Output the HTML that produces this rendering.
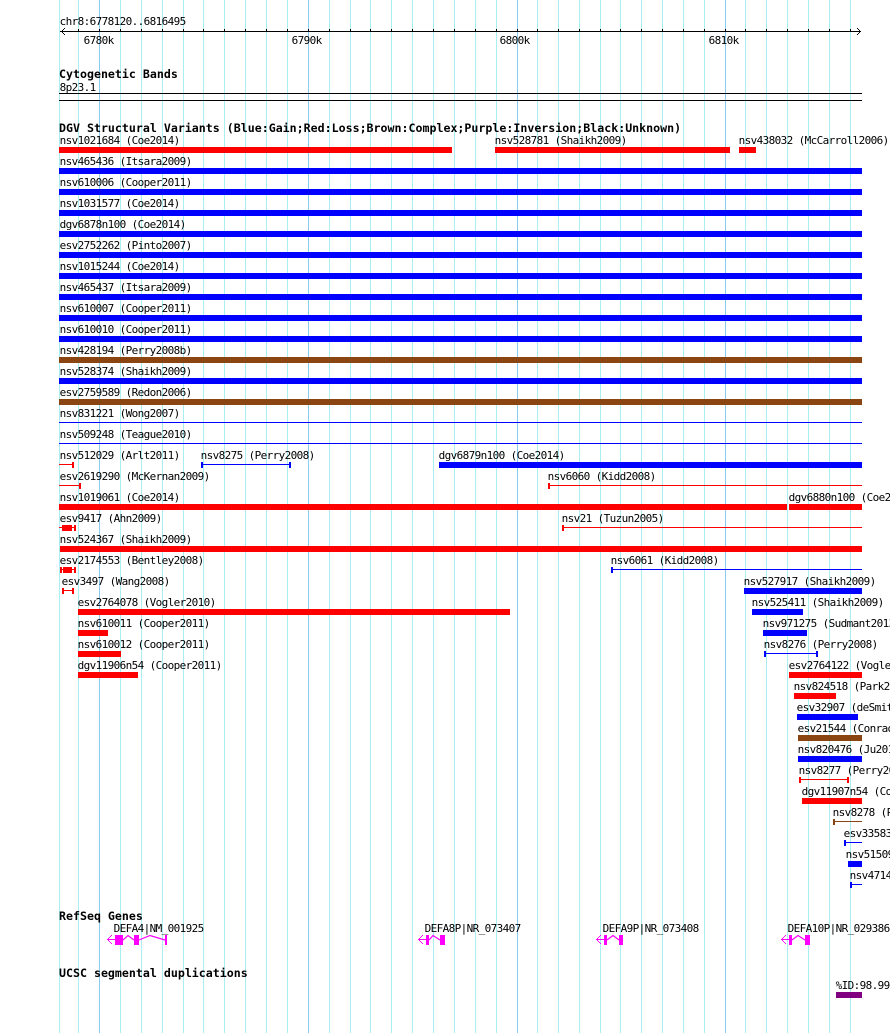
<!DOCTYPE html>
<html><head><meta charset="utf-8">
<style>
html,body{margin:0;padding:0;background:#fff;width:890px;height:1033px;overflow:hidden}
svg{display:block}
text{font-family:"DejaVu Sans Mono","Liberation Mono",monospace;font-size:11px;fill:#000;letter-spacing:-.62px;white-space:pre}
text.b{font-weight:bold;font-size:11.6px;letter-spacing:.01px}
.r{fill:#f00}.u{fill:#00f}.n{fill:#8b4513}.k{fill:#000}.m{fill:#f0f}.p{fill:#800080}
.g{fill:#a8eef2}.j{fill:#88cdf0}
</style></head><body>
<svg width="890" height="1033" viewBox="0 0 890 1033" xmlns="http://www.w3.org/2000/svg" shape-rendering="crispEdges">
<!-- grid -->
<g class="g">
<rect x="59" y="0" width="1" height="1033"/><rect x="78" y="0" width="1" height="1033"/><rect x="120" y="0" width="1" height="1033"/><rect x="141" y="0" width="1" height="1033"/><rect x="162" y="0" width="1" height="1033"/><rect x="183" y="0" width="1" height="1033"/><rect x="203" y="0" width="1" height="1033"/><rect x="224" y="0" width="1" height="1033"/><rect x="245" y="0" width="1" height="1033"/><rect x="266" y="0" width="1" height="1033"/><rect x="287" y="0" width="1" height="1033"/><rect x="329" y="0" width="1" height="1033"/><rect x="350" y="0" width="1" height="1033"/><rect x="370" y="0" width="1" height="1033"/><rect x="391" y="0" width="1" height="1033"/><rect x="412" y="0" width="1" height="1033"/><rect x="433" y="0" width="1" height="1033"/><rect x="454" y="0" width="1" height="1033"/><rect x="475" y="0" width="1" height="1033"/><rect x="496" y="0" width="1" height="1033"/><rect x="537" y="0" width="1" height="1033"/><rect x="558" y="0" width="1" height="1033"/><rect x="579" y="0" width="1" height="1033"/><rect x="600" y="0" width="1" height="1033"/><rect x="620" y="0" width="1" height="1033"/><rect x="641" y="0" width="1" height="1033"/><rect x="662" y="0" width="1" height="1033"/><rect x="683" y="0" width="1" height="1033"/><rect x="704" y="0" width="1" height="1033"/><rect x="745" y="0" width="1" height="1033"/><rect x="766" y="0" width="1" height="1033"/><rect x="787" y="0" width="1" height="1033"/><rect x="808" y="0" width="1" height="1033"/><rect x="829" y="0" width="1" height="1033"/><rect x="850" y="0" width="1" height="1033"/>
</g>
<g class="j">
<rect x="99" y="0" width="1" height="1033"/><rect x="308" y="0" width="1" height="1033"/><rect x="517" y="0" width="1" height="1033"/><rect x="725" y="0" width="1" height="1033"/>
</g>
<!-- axis -->
<g class="k">
<rect x="60" y="31" width="801" height="1"/>
<rect x="78" y="29" width="1" height="3"/><rect x="99" y="29" width="1" height="3"/><rect x="120" y="29" width="1" height="3"/><rect x="141" y="29" width="1" height="3"/><rect x="162" y="29" width="1" height="3"/><rect x="183" y="29" width="1" height="3"/><rect x="203" y="29" width="1" height="3"/><rect x="224" y="29" width="1" height="3"/><rect x="245" y="29" width="1" height="3"/><rect x="266" y="29" width="1" height="3"/><rect x="287" y="29" width="1" height="3"/><rect x="308" y="29" width="1" height="3"/><rect x="329" y="29" width="1" height="3"/><rect x="350" y="29" width="1" height="3"/><rect x="370" y="29" width="1" height="3"/><rect x="391" y="29" width="1" height="3"/><rect x="412" y="29" width="1" height="3"/><rect x="433" y="29" width="1" height="3"/><rect x="454" y="29" width="1" height="3"/><rect x="475" y="29" width="1" height="3"/><rect x="496" y="29" width="1" height="3"/><rect x="517" y="29" width="1" height="3"/><rect x="537" y="29" width="1" height="3"/><rect x="558" y="29" width="1" height="3"/><rect x="579" y="29" width="1" height="3"/><rect x="600" y="29" width="1" height="3"/><rect x="620" y="29" width="1" height="3"/><rect x="641" y="29" width="1" height="3"/><rect x="662" y="29" width="1" height="3"/><rect x="683" y="29" width="1" height="3"/><rect x="704" y="29" width="1" height="3"/><rect x="725" y="29" width="1" height="3"/><rect x="745" y="29" width="1" height="3"/><rect x="766" y="29" width="1" height="3"/><rect x="787" y="29" width="1" height="3"/><rect x="808" y="29" width="1" height="3"/><rect x="829" y="29" width="1" height="3"/><rect x="850" y="29" width="1" height="3"/>
<!-- arrowheads -->
<rect x="61" y="31" width="1" height="1"/><rect x="62" y="30" width="1" height="3"/><rect x="63" y="29" width="1" height="1"/><rect x="63" y="33" width="1" height="1"/><rect x="64" y="28" width="1" height="1"/><rect x="64" y="34" width="1" height="1"/>
<rect x="860" y="31" width="1" height="1"/><rect x="859" y="30" width="1" height="3"/><rect x="858" y="29" width="1" height="1"/><rect x="858" y="33" width="1" height="1"/><rect x="857" y="28" width="1" height="1"/><rect x="857" y="34" width="1" height="1"/>
<!-- band lines -->
<rect x="59" y="93" width="803" height="1"/><rect x="59" y="100" width="803" height="1"/>
</g>
<!-- bars -->
<g class="r">
<rect x="59" y="147" width="393" height="6"/><rect x="495" y="147" width="235" height="6"/><rect x="739" y="147" width="17" height="6"/>
<rect x="59" y="464" width="15" height="1"/><rect x="72" y="462" width="2" height="6"/>
<rect x="59" y="485" width="22" height="1"/><rect x="79" y="483" width="2" height="6"/>
<rect x="548" y="485" width="314" height="1"/><rect x="548" y="483" width="2" height="6"/>
<rect x="59" y="504" width="728" height="6"/><rect x="789" y="504" width="73" height="6"/>
<rect x="59" y="527" width="17" height="1"/><rect x="62" y="525" width="10" height="6"/><rect x="74" y="525" width="2" height="6"/>
<rect x="562" y="527" width="300" height="1"/><rect x="562" y="525" width="2" height="6"/>
<rect x="60" y="546" width="802" height="6"/>
<rect x="60" y="569" width="16" height="1"/><rect x="60" y="567" width="2" height="6"/><rect x="63" y="567" width="9" height="6"/><rect x="74" y="567" width="2" height="6"/>
<rect x="62" y="590" width="12" height="1"/><rect x="62" y="588" width="2" height="6"/><rect x="72" y="588" width="2" height="6"/>
<rect x="78" y="609" width="432" height="6"/><rect x="78" y="630" width="30" height="6"/><rect x="78" y="651" width="43" height="6"/><rect x="78" y="672" width="60" height="6"/>
<rect x="789" y="672" width="73" height="6"/><rect x="794" y="693" width="42" height="6"/>
<rect x="799" y="779" width="50" height="1"/><rect x="799" y="777" width="2" height="6"/><rect x="847" y="777" width="2" height="6"/>
<rect x="802" y="798" width="60" height="6"/>
</g>
<g class="u">
<rect x="59" y="168" width="803" height="6"/><rect x="59" y="189" width="803" height="6"/><rect x="59" y="210" width="803" height="6"/><rect x="59" y="231" width="803" height="6"/><rect x="59" y="252" width="803" height="6"/><rect x="59" y="273" width="803" height="6"/><rect x="59" y="294" width="803" height="6"/><rect x="59" y="315" width="803" height="6"/><rect x="59" y="336" width="803" height="6"/><rect x="59" y="378" width="803" height="6"/>
<rect x="59" y="422" width="803" height="1"/><rect x="59" y="443" width="803" height="1"/>
<rect x="201" y="464" width="90" height="1"/><rect x="201" y="462" width="2" height="6"/><rect x="289" y="462" width="2" height="6"/>
<rect x="439" y="462" width="423" height="6"/>
<rect x="611" y="569" width="251" height="1"/><rect x="611" y="567" width="2" height="6"/>
<rect x="744" y="588" width="118" height="6"/><rect x="752" y="609" width="51" height="6"/><rect x="763" y="630" width="44" height="6"/>
<rect x="764" y="653" width="54" height="1"/><rect x="764" y="651" width="2" height="6"/><rect x="816" y="651" width="2" height="6"/>
<rect x="797" y="714" width="61" height="6"/><rect x="798" y="756" width="64" height="6"/>
<rect x="844" y="842" width="18" height="1"/><rect x="844" y="840" width="2" height="6"/>
<rect x="848" y="861" width="14" height="6"/>
<rect x="850" y="884" width="12" height="1"/><rect x="850" y="882" width="2" height="6"/>
</g>
<g class="n">
<rect x="59" y="357" width="803" height="6"/><rect x="59" y="399" width="803" height="6"/><rect x="798" y="735" width="64" height="6"/>
<rect x="833" y="821" width="29" height="1"/><rect x="833" y="819" width="2" height="6"/>
</g>
<rect class="p" x="836" y="992" width="26" height="6"/>
<!-- genes -->
<g class="m">
<rect x="115" y="935" width="8" height="10"/><rect x="134" y="935" width="5" height="10"/><rect x="165" y="935" width="2" height="10"/>
<rect x="107" y="939" width="8" height="1"/><rect x="108" y="938" width="1" height="3"/><rect x="109" y="937" width="1" height="1"/><rect x="109" y="941" width="1" height="1"/><rect x="110" y="936" width="1" height="1"/><rect x="110" y="942" width="1" height="1"/><rect x="111" y="935" width="1" height="1"/><rect x="111" y="943" width="1" height="1"/>
<rect x="426" y="935" width="3" height="10"/><rect x="440" y="935" width="5" height="10"/>
<rect x="418" y="939" width="8" height="1"/><rect x="419" y="938" width="1" height="3"/><rect x="420" y="937" width="1" height="1"/><rect x="420" y="941" width="1" height="1"/><rect x="421" y="936" width="1" height="1"/><rect x="421" y="942" width="1" height="1"/><rect x="422" y="935" width="1" height="1"/><rect x="422" y="943" width="1" height="1"/>
<rect x="604" y="935" width="3" height="10"/><rect x="619" y="935" width="4" height="10"/>
<rect x="596" y="939" width="8" height="1"/><rect x="597" y="938" width="1" height="3"/><rect x="598" y="937" width="1" height="1"/><rect x="598" y="941" width="1" height="1"/><rect x="599" y="936" width="1" height="1"/><rect x="599" y="942" width="1" height="1"/><rect x="600" y="935" width="1" height="1"/><rect x="600" y="943" width="1" height="1"/>
<rect x="789" y="935" width="3" height="10"/><rect x="805" y="935" width="5" height="10"/>
<rect x="781" y="939" width="8" height="1"/><rect x="782" y="938" width="1" height="3"/><rect x="783" y="937" width="1" height="1"/><rect x="783" y="941" width="1" height="1"/><rect x="784" y="936" width="1" height="1"/><rect x="784" y="942" width="1" height="1"/><rect x="785" y="935" width="1" height="1"/><rect x="785" y="943" width="1" height="1"/>
</g>
<g fill="none" stroke="#f0f" stroke-width="1.2" shape-rendering="auto">
<path d="M123 940L128 935.5L134 940M139 940L150 935.5L165 940M429 940L433 935.5L440 940M607 940L613 935.5L619 940M792 940L798 935.5L805 940"/>
</g>
<!-- text -->
<text class="b" x="59" y="78">Cytogenetic Bands</text>
<text class="b" x="59" y="132">DGV Structural Variants (Blue:Gain;Red:Loss;Brown:Complex;Purple:Inversion;Black:Unknown)</text>
<text class="b" x="59" y="920">RefSeq Genes</text>
<text class="b" x="59" y="977">UCSC segmental duplications</text>
<g transform="translate(-0.4,0)">
<text x="60" y="25">chr8:6778120..6816495</text>
<text x="84" y="44">6780k</text><text x="292" y="44">6790k</text><text x="500" y="44">6800k</text><text x="709" y="44">6810k</text>
<text x="60" y="91">8p23.1</text>
<text x="60" y="144">nsv1021684 (Coe2014)</text><text x="495" y="144">nsv528781 (Shaikh2009)</text><text x="739" y="144">nsv438032 (McCarroll2006)</text>
<text x="60" y="165">nsv465436 (Itsara2009)</text>
<text x="60" y="186">nsv610006 (Cooper2011)</text>
<text x="60" y="207">nsv1031577 (Coe2014)</text>
<text x="60" y="228">dgv6878n100 (Coe2014)</text>
<text x="60" y="249">esv2752262 (Pinto2007)</text>
<text x="60" y="270">nsv1015244 (Coe2014)</text>
<text x="60" y="291">nsv465437 (Itsara2009)</text>
<text x="60" y="312">nsv610007 (Cooper2011)</text>
<text x="60" y="333">nsv610010 (Cooper2011)</text>
<text x="60" y="354">nsv428194 (Perry2008b)</text>
<text x="60" y="375">nsv528374 (Shaikh2009)</text>
<text x="60" y="396">esv2759589 (Redon2006)</text>
<text x="60" y="417">nsv831221 (Wong2007)</text>
<text x="60" y="438">nsv509248 (Teague2010)</text>
<text x="60" y="459">nsv512029 (Arlt2011)</text><text x="201" y="459">nsv8275 (Perry2008)</text><text x="439" y="459">dgv6879n100 (Coe2014)</text>
<text x="60" y="480">esv2619290 (McKernan2009)</text><text x="548" y="480">nsv6060 (Kidd2008)</text>
<text x="60" y="501">nsv1019061 (Coe2014)</text><text x="789" y="501">dgv6880n100 (Coe2014)</text>
<text x="60" y="522">esv9417 (Ahn2009)</text><text x="562" y="522">nsv21 (Tuzun2005)</text>
<text x="60" y="543">nsv524367 (Shaikh2009)</text>
<text x="60" y="564">esv2174553 (Bentley2008)</text><text x="611" y="564">nsv6061 (Kidd2008)</text>
<text x="62" y="585">esv3497 (Wang2008)</text><text x="744" y="585">nsv527917 (Shaikh2009)</text>
<text x="78" y="606">esv2764078 (Vogler2010)</text><text x="752" y="606">nsv525411 (Shaikh2009)</text>
<text x="78" y="627">nsv610011 (Cooper2011)</text><text x="763" y="627">nsv971275 (Sudmant2013)</text>
<text x="78" y="648">nsv610012 (Cooper2011)</text><text x="764" y="648">nsv8276 (Perry2008)</text>
<text x="78" y="669">dgv11906n54 (Cooper2011)</text><text x="789" y="669">esv2764122 (Vogler2010)</text>
<text x="794" y="690">nsv824518 (Park2010)</text>
<text x="797" y="711">esv32907 (deSmith2007)</text>
<text x="798" y="732">esv21544 (Conrad2009)</text>
<text x="798" y="753">nsv820476 (Ju2010)</text>
<text x="799" y="774">nsv8277 (Perry2008)</text>
<text x="802" y="795">dgv11907n54 (Cooper2011)</text>
<text x="833" y="816">nsv8278 (Perry2008)</text>
<text x="844" y="837">esv33583 (Conrad2009)</text>
<text x="846" y="858">nsv515090 (Pang2010)</text>
<text x="850" y="879">nsv471411 (Conrad2009)</text>
<text x="114" y="932">DEFA4|NM_001925</text><text x="425" y="932">DEFA8P|NR_073407</text><text x="603" y="932">DEFA9P|NR_073408</text><text x="788" y="932">DEFA10P|NR_029386</text>
<text x="836" y="989">%ID:98.99</text>
</g>
</svg>
</body></html>
